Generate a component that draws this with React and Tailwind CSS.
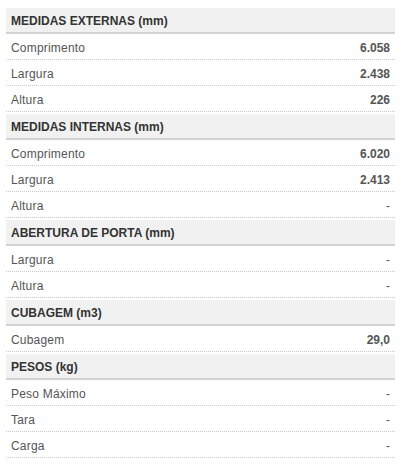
const sections = [
  {
    title: "MEDIDAS EXTERNAS (mm)",
    rows: [
      ["Comprimento", "6.058"],
      ["Largura", "2.438"],
      ["Altura", "226"],
    ],
  },
  {
    title: "MEDIDAS INTERNAS (mm)",
    rows: [
      ["Comprimento", "6.020"],
      ["Largura", "2.413"],
      ["Altura", "-"],
    ],
  },
  {
    title: "ABERTURA DE PORTA (mm)",
    rows: [
      ["Largura", "-"],
      ["Altura", "-"],
    ],
  },
  {
    title: "CUBAGEM (m3)",
    rows: [["Cubagem", "29,0"]],
  },
  {
    title: "PESOS (kg)",
    rows: [
      ["Peso Máximo", "-"],
      ["Tara", "-"],
      ["Carga", "-"],
    ],
  },
];

export default function App() {
  return (
    <div className="w-[405px] h-[467px] bg-white pt-[8px] pl-[6px] font-['Liberation_Sans',Arial,sans-serif] text-[12px]">
      <div className="w-[389px] flex flex-col gap-[2px]">
        {sections.map((s) => (
          <div key={s.title}>
            <div className="h-[26px] bg-[#f1f1f1] border-b-2 border-[#d3d3d3] pl-[5px] pt-[2px] flex items-center font-bold text-[#333]">
              {s.title}
            </div>
            {s.rows.map(([label, value]) => (
              <div
                key={label}
                className="h-[26px] border-b border-dotted border-[#c8c8c8] pl-[5px] pr-[5px] pt-[2px] flex items-center justify-between text-[#555]"
              >
                <span className="tracking-[0.2px]">{label}</span>
                <span className={value === "-" ? "" : "font-bold"}>{value}</span>
              </div>
            ))}
          </div>
        ))}
      </div>
    </div>
  );
}
